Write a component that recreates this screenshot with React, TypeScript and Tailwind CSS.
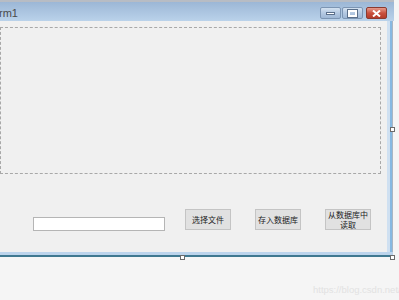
import { FC } from "react";

const cjk = "font-['Microsoft_YaHei','Noto_Sans_CJK_SC',sans-serif]";

const WinButton: FC<{ kind: "min" | "max" | "close" }> = ({ kind }) => {
  if (kind === "close") {
    return (
      <div className="w-[21px] h-[12px] rounded-[2px] border border-[#8a3a30] bg-gradient-to-b from-[#e59a8c] via-[#c9503e] to-[#b53c2a] flex items-center justify-center">
        <svg width="9" height="7" viewBox="0 0 9 7">
          <path d="M1 0.5 L8 6.5 M8 0.5 L1 6.5" stroke="#ffffff" strokeWidth="2" />
        </svg>
      </div>
    );
  }
  return (
    <div className="w-[21px] h-[12px] rounded-[2px] border border-[#7c95b3] bg-gradient-to-b from-[#d3e1f0] via-[#b4c9e2] to-[#9fb8d6] flex items-center justify-center">
      {kind === "min" ? (
        <div className="w-[9px] h-[3px] bg-white border border-[#5a6f8a]" />
      ) : (
        <div className="w-[9px] h-[7px] border-[2px] border-white outline outline-1 outline-[#5a6f8a]" />
      )}
    </div>
  );
};

const FormButton: FC<{ children: React.ReactNode; className?: string }> = ({ children, className }) => (
  <div
    className={`w-[46px] h-[21px] bg-[#e1e1e1] border border-[#c4c4c4] flex flex-col items-center justify-center text-center text-[8px] leading-[10px] text-[#222] ${cjk} ${className ?? ""}`}
  >
    {children}
  </div>
);

export default function App() {
  return (
    <div className="relative w-[399px] h-[300px] bg-[#f5f5f5] overflow-hidden">
      <div className="w-[394px] flex flex-col">
        {/* title bar */}
        <div className="h-[21px] border-t-[2px] border-[#b7bcc4] bg-gradient-to-b from-[#9cb7d6] to-[#bad2ea] flex items-center">
          <span className="text-[11px] text-[#4a4a4a] font-['Liberation_Sans',sans-serif] leading-none ml-[-1px] mt-[3px]">
            rm1
          </span>
          <div className="ml-auto flex gap-[1px] mr-[7px] mt-[3px]">
            <WinButton kind="min" />
            <WinButton kind="max" />
            <div className="w-[1px]" />
            <WinButton kind="close" />
          </div>
        </div>
        <div className="flex">
          {/* client area */}
          <div className="w-[387px] h-[231px] bg-[#f0f0f0] flex flex-col pt-[6px]">
            <div className="w-[381px] h-[147px] border border-dashed border-[#a8a8a8]" />
            <div className="flex items-start mt-[35px]">
              <div className="ml-[33px] mt-[8px] w-[132px] h-[14px] bg-white border border-[#b5b5b5]" />
              <FormButton className="ml-[20px]">
                <span>选择文件</span>
              </FormButton>
              <FormButton className="ml-[24px]">
                <span>存入数据库</span>
              </FormButton>
              <FormButton className="ml-[24px]">
                <span>从数据库中</span>
                <span>读取</span>
              </FormButton>
            </div>
          </div>
          {/* right frame */}
          <div className="w-[3px] bg-[#cfe0f1]" />
          <div className="w-[2px] bg-[#86b9e2]" />
          <div className="w-[1px] bg-[#a9b6c3]" />
        </div>
        {/* bottom frame */}
        <div className="h-[3px] bg-[#bcd4ec] w-[393px]" />
        <div className="h-[2px] bg-[#3f7890] w-[393px]" />
      </div>

      {/* resize handles */}
      <div className="absolute left-[390px] top-[127px] w-[5px] h-[5px] bg-white border border-[#6b6b6b]" />
      <div className="absolute left-[180px] top-[255px] w-[5px] h-[5px] bg-white border border-[#6b6b6b]" />
      <div className="absolute left-[390px] top-[255px] w-[5px] h-[5px] bg-white border border-[#6b6b6b]" />

      {/* watermark */}
      <div className="absolute left-[313px] top-[283px] text-[9.5px] text-[#e2e2e2] font-['Liberation_Sans',sans-serif] whitespace-nowrap">
        https://blog.csdn.net/Ch
      </div>
    </div>
  );
}
